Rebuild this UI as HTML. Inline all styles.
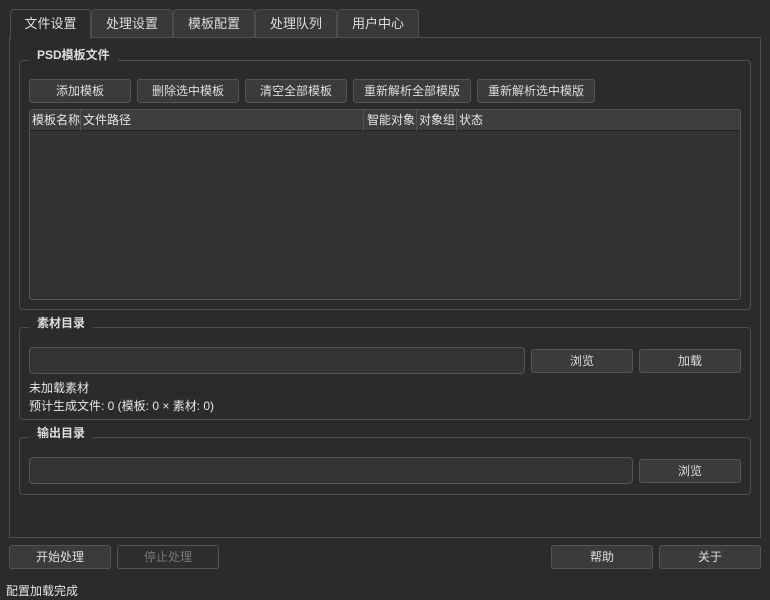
<!DOCTYPE html>
<html><head><meta charset="utf-8"><style>
*{box-sizing:border-box;margin:0;padding:0}
body{width:770px;height:600px;background:#2b2b2b;color:#e6e6e6;font:12px "Liberation Sans","Noto Sans CJK SC",sans-serif;position:relative;overflow:hidden}
.a{position:absolute}
.tab{position:absolute;top:9px;height:29px;border:1px solid #4e4e4e;border-bottom:none;border-radius:4px 4px 0 0;background:#393939;text-align:center;line-height:28px;color:#ddd;font-size:13px}
.tab.sel{background:#2b2b2b;top:9px;height:30px;z-index:2}
.pane{left:9px;top:37px;width:752px;height:501px;border:1px solid #4e4e4e}
.grp{border:1px solid #4e4e4e;border-radius:4px}
.gt{position:absolute;background:#2b2b2b;padding:0 8px;font-weight:bold;font-size:12px;color:#ddd;line-height:14px}
.btn{position:absolute;height:24px;background:#3b3b3b;border:1px solid #555;border-radius:3px;text-align:center;line-height:22px;font-size:12px;color:#ddd}
.in{position:absolute;height:27px;background:#343434;border:1px solid #555;border-radius:4px}
</style></head><body>
<div class="tab sel" style="left:10px;width:81px">文件设置</div>
<div class="tab" style="left:91px;width:82px">处理设置</div>
<div class="tab" style="left:173px;width:82px">模板配置</div>
<div class="tab" style="left:255px;width:82px">处理队列</div>
<div class="tab" style="left:337px;width:82px">用户中心</div>
<div class="a pane"></div>

<div class="a grp" style="left:19px;top:60px;width:732px;height:250px"></div>
<div class="gt" style="left:29px;top:48px">PSD模板文件</div>
<div class="btn" style="left:29px;top:79px;width:102px">添加模板</div>
<div class="btn" style="left:137px;top:79px;width:102px">删除选中模板</div>
<div class="btn" style="left:245px;top:79px;width:102px">清空全部模板</div>
<div class="btn" style="left:353px;top:79px;width:118px">重新解析全部模版</div>
<div class="btn" style="left:477px;top:79px;width:118px">重新解析选中模版</div>
<div class="a" style="left:29px;top:109px;width:712px;height:191px;background:#323232;border:1px solid #555;border-radius:3px"></div>
<div class="a" style="left:30px;top:110px;width:710px;height:21px;background:#3e3e3e;border-bottom:1px solid #222"></div>
<div class="a" style="left:32px;top:113px;line-height:15px">模板名称</div>
<div class="a" style="left:80px;top:110px;width:1px;height:21px;background:#555"></div>
<div class="a" style="left:83px;top:113px;line-height:15px">文件路径</div>
<div class="a" style="left:363px;top:110px;width:1px;height:21px;background:#555"></div>
<div class="a" style="left:367px;top:113px;line-height:15px">智能对象</div>
<div class="a" style="left:416px;top:110px;width:1px;height:21px;background:#555"></div>
<div class="a" style="left:419px;top:113px;line-height:15px">对象组</div>
<div class="a" style="left:456px;top:110px;width:1px;height:21px;background:#555"></div>
<div class="a" style="left:459px;top:113px;line-height:15px">状态</div>

<div class="a grp" style="left:19px;top:327px;width:732px;height:93px"></div>
<div class="gt" style="left:29px;top:316px">素材目录</div>
<div class="in" style="left:29px;top:347px;width:496px"></div>
<div class="btn" style="left:531px;top:349px;width:102px">浏览</div>
<div class="btn" style="left:639px;top:349px;width:102px">加载</div>
<div class="a" style="left:29px;top:379px">未加载素材</div>
<div class="a" style="left:29px;top:397px">预计生成文件: 0 (模板: 0 × 素材: 0)</div>

<div class="a grp" style="left:19px;top:437px;width:732px;height:58px"></div>
<div class="gt" style="left:29px;top:426px">输出目录</div>
<div class="in" style="left:29px;top:457px;width:604px"></div>
<div class="btn" style="left:639px;top:459px;width:102px">浏览</div>

<div class="btn" style="left:9px;top:545px;width:102px">开始处理</div>
<div class="btn" style="left:117px;top:545px;width:102px;color:#777;background:#2e2e2e">停止处理</div>
<div class="btn" style="left:551px;top:545px;width:102px">帮助</div>
<div class="btn" style="left:659px;top:545px;width:102px">关于</div>
<div class="a" style="left:6px;top:582px">配置加载完成</div>
</body></html>
